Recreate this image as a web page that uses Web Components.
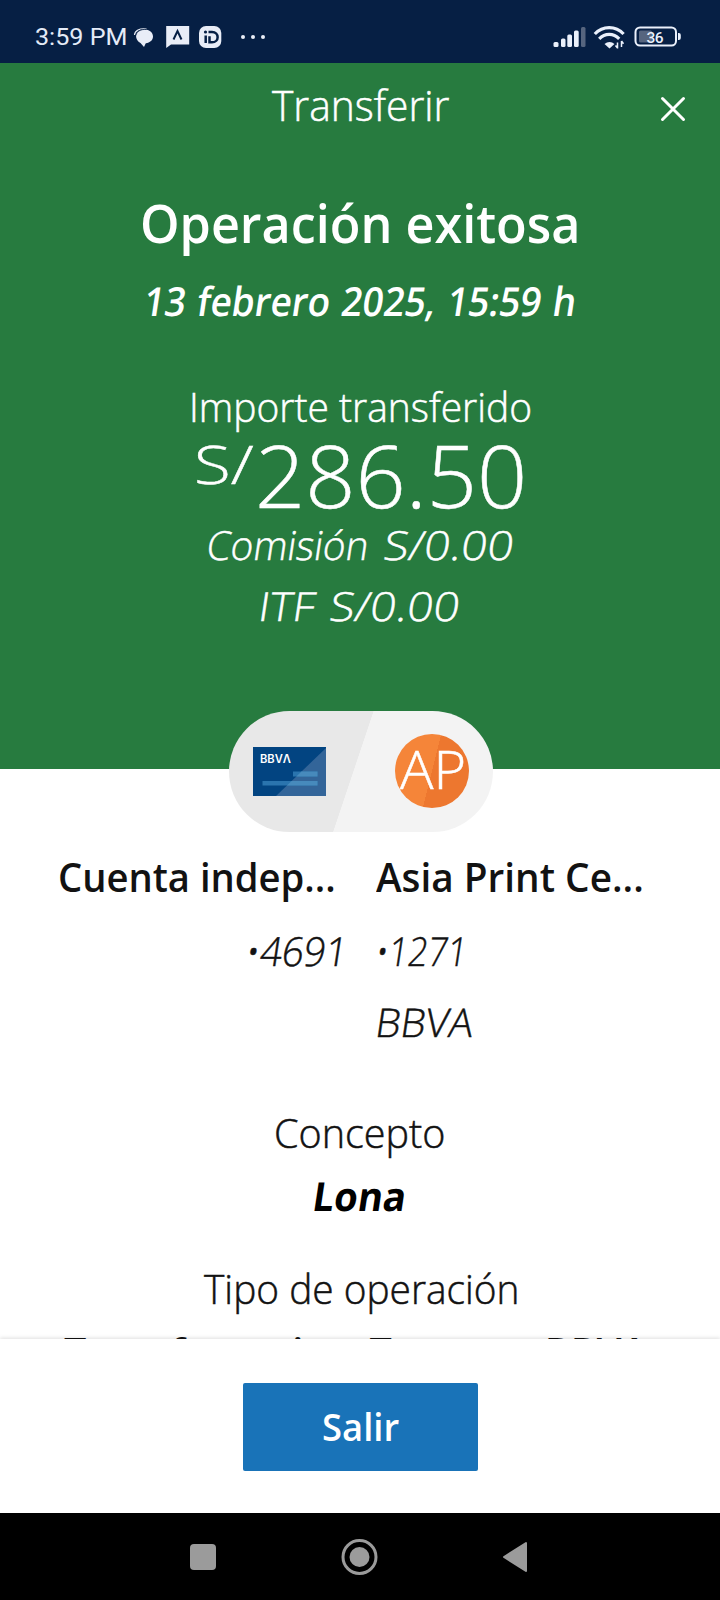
<!DOCTYPE html>
<html lang="es">
<head>
<meta charset="utf-8">
<title>Transferir</title>
<style>
html,body{margin:0;padding:0;background:#fff}
body{font-family:"Open Sans","Noto Sans",sans-serif;color:#121212}
</style>
</head>
<body>
<transfer-screen></transfer-screen>
<script>
const define=(name,html,setup)=>{
  const t=document.createElement('template');
  t.innerHTML=html;
  customElements.define(name,class extends HTMLElement{
    constructor(){super();this.attachShadow({mode:'open'}).append(t.content.cloneNode(true));}
    connectedCallback(){if(setup)setup(this,this.shadowRoot);}
  });
};
const ctx=document.createElement('canvas').getContext('2d');

/* One line of text, stretched so that its glyphs span exactly `width` pixels.
   `slant` leans the upright letters around their baseline. */
define('fit-line',`<style>
:host{display:block;flex:none;white-space:nowrap}
span{display:block;width:max-content;white-space:pre}
</style><span></span>`,(el,root)=>{
  const a=(n,d)=>el.getAttribute(n)||d;
  const text=a('text',''),size=+a('size','40'),weight=a('weight','300'),w=+a('width','100'),lh=+a('line','50');
  const lean=el.hasAttribute('slant')?8.5:0,family=a('family','"Open Sans"'),ws=+a('gap','0');
  const s=root.querySelector('span');
  ctx.font=`${weight} ${size}px ${family}`;
  const m=ctx.measureText(text);
  const ink=m.actualBoundingBoxLeft+m.actualBoundingBoxRight+ws*(text.split(' ').length-1);
  const k=(w-Math.tan(lean*Math.PI/180)*size*.62)/ink;
  el.style.width=w+'px';
  el.style.height=lh+'px';
  s.textContent=text;
  s.style.cssText=`font:${weight} ${size}px/${lh}px ${family},sans-serif;word-spacing:${ws}px;margin-left:${m.actualBoundingBoxLeft*k}px;transform-origin:0 ${lh/2+size*.388}px;transform:skewX(${-lean}deg) scaleX(${k});`+(weight==='300'?'-webkit-text-stroke:.5px currentColor':'');
});

define('status-bar',`<style>
:host{display:flex;height:63px;box-sizing:border-box;background:#061f44;color:#e4ebf8;padding:10px 39px 0 35px;align-items:center;justify-content:space-between;flex:none}
div{display:flex;align-items:center}
svg{display:block}
fit-line{margin-left:1px;margin-right:-1px}
</style>
<div><fit-line text="3:59 PM" family="Roboto" weight="450" size="24.5" width="90" line="28"></fit-line>
<svg width="145" height="30" viewBox="125 21 145 30" fill="#e9edf7">
<path d="M136 34.500c0-3.800 4-6 8.500-6 5 0 8.500 3 8.500 7 0 3.800-3 6.200-7.200 6.700L144 46l-3.500-4c-2.800-1.200-4.500-4-4.500-7.500z"/>
<path d="M134.500 34c.3-4.500 5-7 12-6" fill="none" stroke="#e9edf7" stroke-width="1.200"/><path d="M136 34.500c.5-4 4.500-6.500 10.500-6" fill="none" stroke="#061f44" stroke-width=".8"/>
<path d="M166.200 25h23v18.500H171l-4.800 3.500z"/><path d="M173.500 38.500l4-8.500 4 8.500" fill="none" stroke="#061f44" stroke-width="2"/>
<rect x="199" y="25" width="22.300" height="22" rx="7"/>
<g fill="none" stroke="#061f44" stroke-width="2.500"><path d="M205.700 34.500v7.500M208.500 31h3.500c7.500 0 7.500 10.300 0 10.300h-2.500v-6"/></g><circle cx="205.500" cy="31" r="1.600" fill="#061f44"/>
<circle cx="243" cy="36" r="2"/><circle cx="253" cy="36" r="2"/><circle cx="263" cy="36" r="2"/>
</svg></div>
<svg width="130" height="30" viewBox="551 21.500 130 30" fill="#eaf0fb">
<rect x="553.500" y="41.500" width="5" height="5" rx="1.500"/><rect x="561" y="38" width="4.500" height="8.500" rx="1.500"/><rect x="567.300" y="34" width="4.700" height="12.500" rx="1.500"/><rect x="574" y="30" width="4.700" height="16.500" rx="1.500"/><rect x="581" y="26.500" width="4.500" height="20" rx="1.500" fill="#56657f"/>
<g fill="none" stroke="#eaf0fb" stroke-width="3.200"><path d="M594.800 33.500c8-8.500 20.800-8.500 28.800 0M599.200 38.300c5.800-5.800 14.200-5.800 20 0"/></g>
<path d="M604.500 43.500c3-2.800 7-2.800 10 0l-5 4.500z"/>
<path d="M617.200 41v6.500M621.500 41v6.500" stroke="#061f44" stroke-width="4.500"/><path d="M617.500 42v6M621.500 40.500v6M615.500 45l2 2.500M621.500 40.500l2 2.700" stroke="#eaf0fb" stroke-width="1.500" fill="none"/>
<rect x="635.500" y="27" width="40.500" height="18" rx="4.500" fill="none" stroke="#eaf0fb" stroke-width="2"/><rect x="639" y="30" width="13" height="12" rx="1.500" fill="#56657f"/><path d="M678 32.500h.8q2 0 2 2v3q0 2-2 2h-.8z"/>
<text x="646.500" y="42" font-family="Roboto,sans-serif" font-weight="500" font-size="15.500" textLength="17">36</text>
</svg>`);

define('transfer-hero',`<style>
:host{display:flex;flex-direction:column;align-items:center;height:706px;box-sizing:border-box;background:#277b3f;color:#fff;padding:12px 0 0;flex:none}
header{display:grid;grid-template-columns:1fr auto 1fr;width:720px;height:60px;align-items:center}
fit-line.t{grid-column:2;margin-left:1px}
header svg{justify-self:end;margin:7px 34px 0 0}
.title{margin-top:53px}.date{margin-top:18px;margin-left:-1px}.lab{margin-top:56px;margin-left:2px}
.amt,.fee,.itf{display:flex;align-items:flex-start}
.amt{gap:5px;margin-top:5px}
.amt .cur{margin-top:-3px}
.fee{margin-top:7px;gap:17px}.itf{margin-top:11px;gap:14px;margin-left:1px}
</style>
<header><fit-line class="t" text="Transferir" size="42" width="177" line="60"></fit-line>
<svg width="26" height="26" viewBox="0 0 26 26" stroke="#fff" stroke-width="3" stroke-linecap="round"><path d="M2.500 2.500l21 21M23.500 2.500l-21 21"/></svg></header>
<fit-line class="title" text="Operación exitosa" size="53" weight="600" width="434" line="70"></fit-line>
<fit-line class="date" text="13 febrero 2025, 15:59 h" gap="2" size="40" weight="600" slant width="432"></fit-line>
<fit-line class="lab" text="Importe transferido" size="39.500" width="338"></fit-line>
<div class="amt"><fit-line class="cur" text="S/" size="53" width="57" line="60"></fit-line><fit-line text="286.50" size="86" width="264" line="76"></fit-line></div>
<div class="fee"><fit-line text="Comisión" slant width="161"></fit-line><fit-line text="S/0.00" slant width="129"></fit-line></div>
<div class="itf"><fit-line text="ITF" slant width="55"></fit-line><fit-line text="S/0.00" slant width="129"></fit-line></div>`);

define('account-pill',`<style>
:host{display:flex;width:264px;height:121px;margin:-58px 0 0 229px;box-sizing:border-box;border-radius:60.500px;background:linear-gradient(108.500deg,#e8e8e8 0 calc(50% - 7.500px),#f3f3f3 calc(50% - 7px));align-items:center;justify-content:space-between;padding:0 24px 1px;flex:none;position:relative}
.av{width:74px;height:74px;border-radius:50%;background:linear-gradient(104deg,#f58539 0 50%,#ed772f 50%);color:#fff;display:flex;justify-content:center;align-items:center}
.av fit-line{margin-top:-4px}
</style>
<svg width="73" height="49" viewBox="0 0 73 49"><path fill="#024481" d="M0 0h73v49H0z"/><path fill="#336599" d="M73 1v48H23z"/><path fill="#2a74ae" d="M40 24.500h24.500v5H40zM9.500 34h55v4.500h-55z"/><path fill="#478abc" d="M48.500 24.500h16v5H43.300zM38.600 34h25.900v4.500H33.900z"/><text x="7" y="15.500" fill="#fff" font-family="Inter,sans-serif" font-weight="600" font-size="11.500" textLength="31" lengthAdjust="spacingAndGlyphs">BBVΛ</text></svg>
<div class="av"><fit-line text="AP" size="53" width="64" line="70"></fit-line></div>`);

define('account-parties',`<style>
:host{display:grid;grid-template-columns:343px 1fr;column-gap:33px;margin-top:20px}
.l,.r{display:flex;flex-direction:column}
.l{align-items:flex-end}
.n{margin-top:24px}.b{margin-top:21px}
.l .name{margin-right:9px}
.l .n{margin-right:2px}
.r .n,.r .b{margin-left:1px}
</style>
<div class="l"><fit-line class="name" text="Cuenta indep..." weight="600" size="39.500" width="274"></fit-line><fit-line class="n" text="•4691" slant width="93"></fit-line></div>
<div class="r"><fit-line text="Asia Print Ce..." weight="600" size="39.500" width="266"></fit-line><fit-line class="n" text="•1271" slant width="84"></fit-line><fit-line class="b" text="BBVA" slant size="39.500" width="98"></fit-line></div>`);

define('transfer-details',`<style>
:host{display:flex;flex-direction:column;align-items:center;margin-top:61px}
.v{margin-top:13px;color:#000}.k{margin-top:43px}.w{margin-top:13px;margin-right:8px}
</style>
<fit-line text="Concepto" width="168"></fit-line>
<fit-line class="v" text="Lona" weight="700" slant width="92"></fit-line>
<fit-line class="k" text="Tipo de operación" width="313"></fit-line>
<fit-line class="w" text="Transferencia a Terceros BBVA" weight="600" width="584"></fit-line>`);

define('action-footer',`<style>
:host{display:flex;height:174px;box-sizing:border-box;padding:43.500px 0 0 243px;background:#fff;box-shadow:0 -1px 4px rgba(0,0,0,.13);flex:none;position:relative}
button{all:unset;display:flex;justify-content:center;align-items:center;width:235px;height:88px;border-radius:2px;background:#1973b8;color:#fff}
</style><button><fit-line text="Salir" weight="600" size="37.500" width="76" line="82"></fit-line></button>`);

define('nav-bar',`<style>
:host{display:flex;height:87px;background:#000;align-items:center;justify-content:space-between;padding:0 192px 0 189px;box-sizing:border-box;flex:none}
svg{display:block}
</style>
<svg width="28" height="28"><rect x="1" y="1" width="26" height="26" rx="4" fill="#9b9b9b"/></svg>
<svg width="38" height="38"><circle cx="18.500" cy="19" r="16.500" fill="none" stroke="#9b9b9b" stroke-width="3"/><circle cx="18.500" cy="19" r="10" fill="#9b9b9b"/></svg>
<svg width="26" height="32"><path d="M2 16L24 2v28z" fill="#9b9b9b" stroke="#9b9b9b" stroke-width="2" stroke-linejoin="round"/></svg>`);

define('transfer-screen',`<style>
:host{display:flex;flex-direction:column;width:720px;height:1600px;overflow:hidden;background:#fff}
main{flex:1;min-height:0;overflow:hidden;display:flex;flex-direction:column}
</style>
<status-bar></status-bar>
<main><transfer-hero></transfer-hero><account-pill></account-pill><account-parties></account-parties><transfer-details></transfer-details></main>
<action-footer></action-footer><nav-bar></nav-bar>`);
</script>
</body>
</html>
